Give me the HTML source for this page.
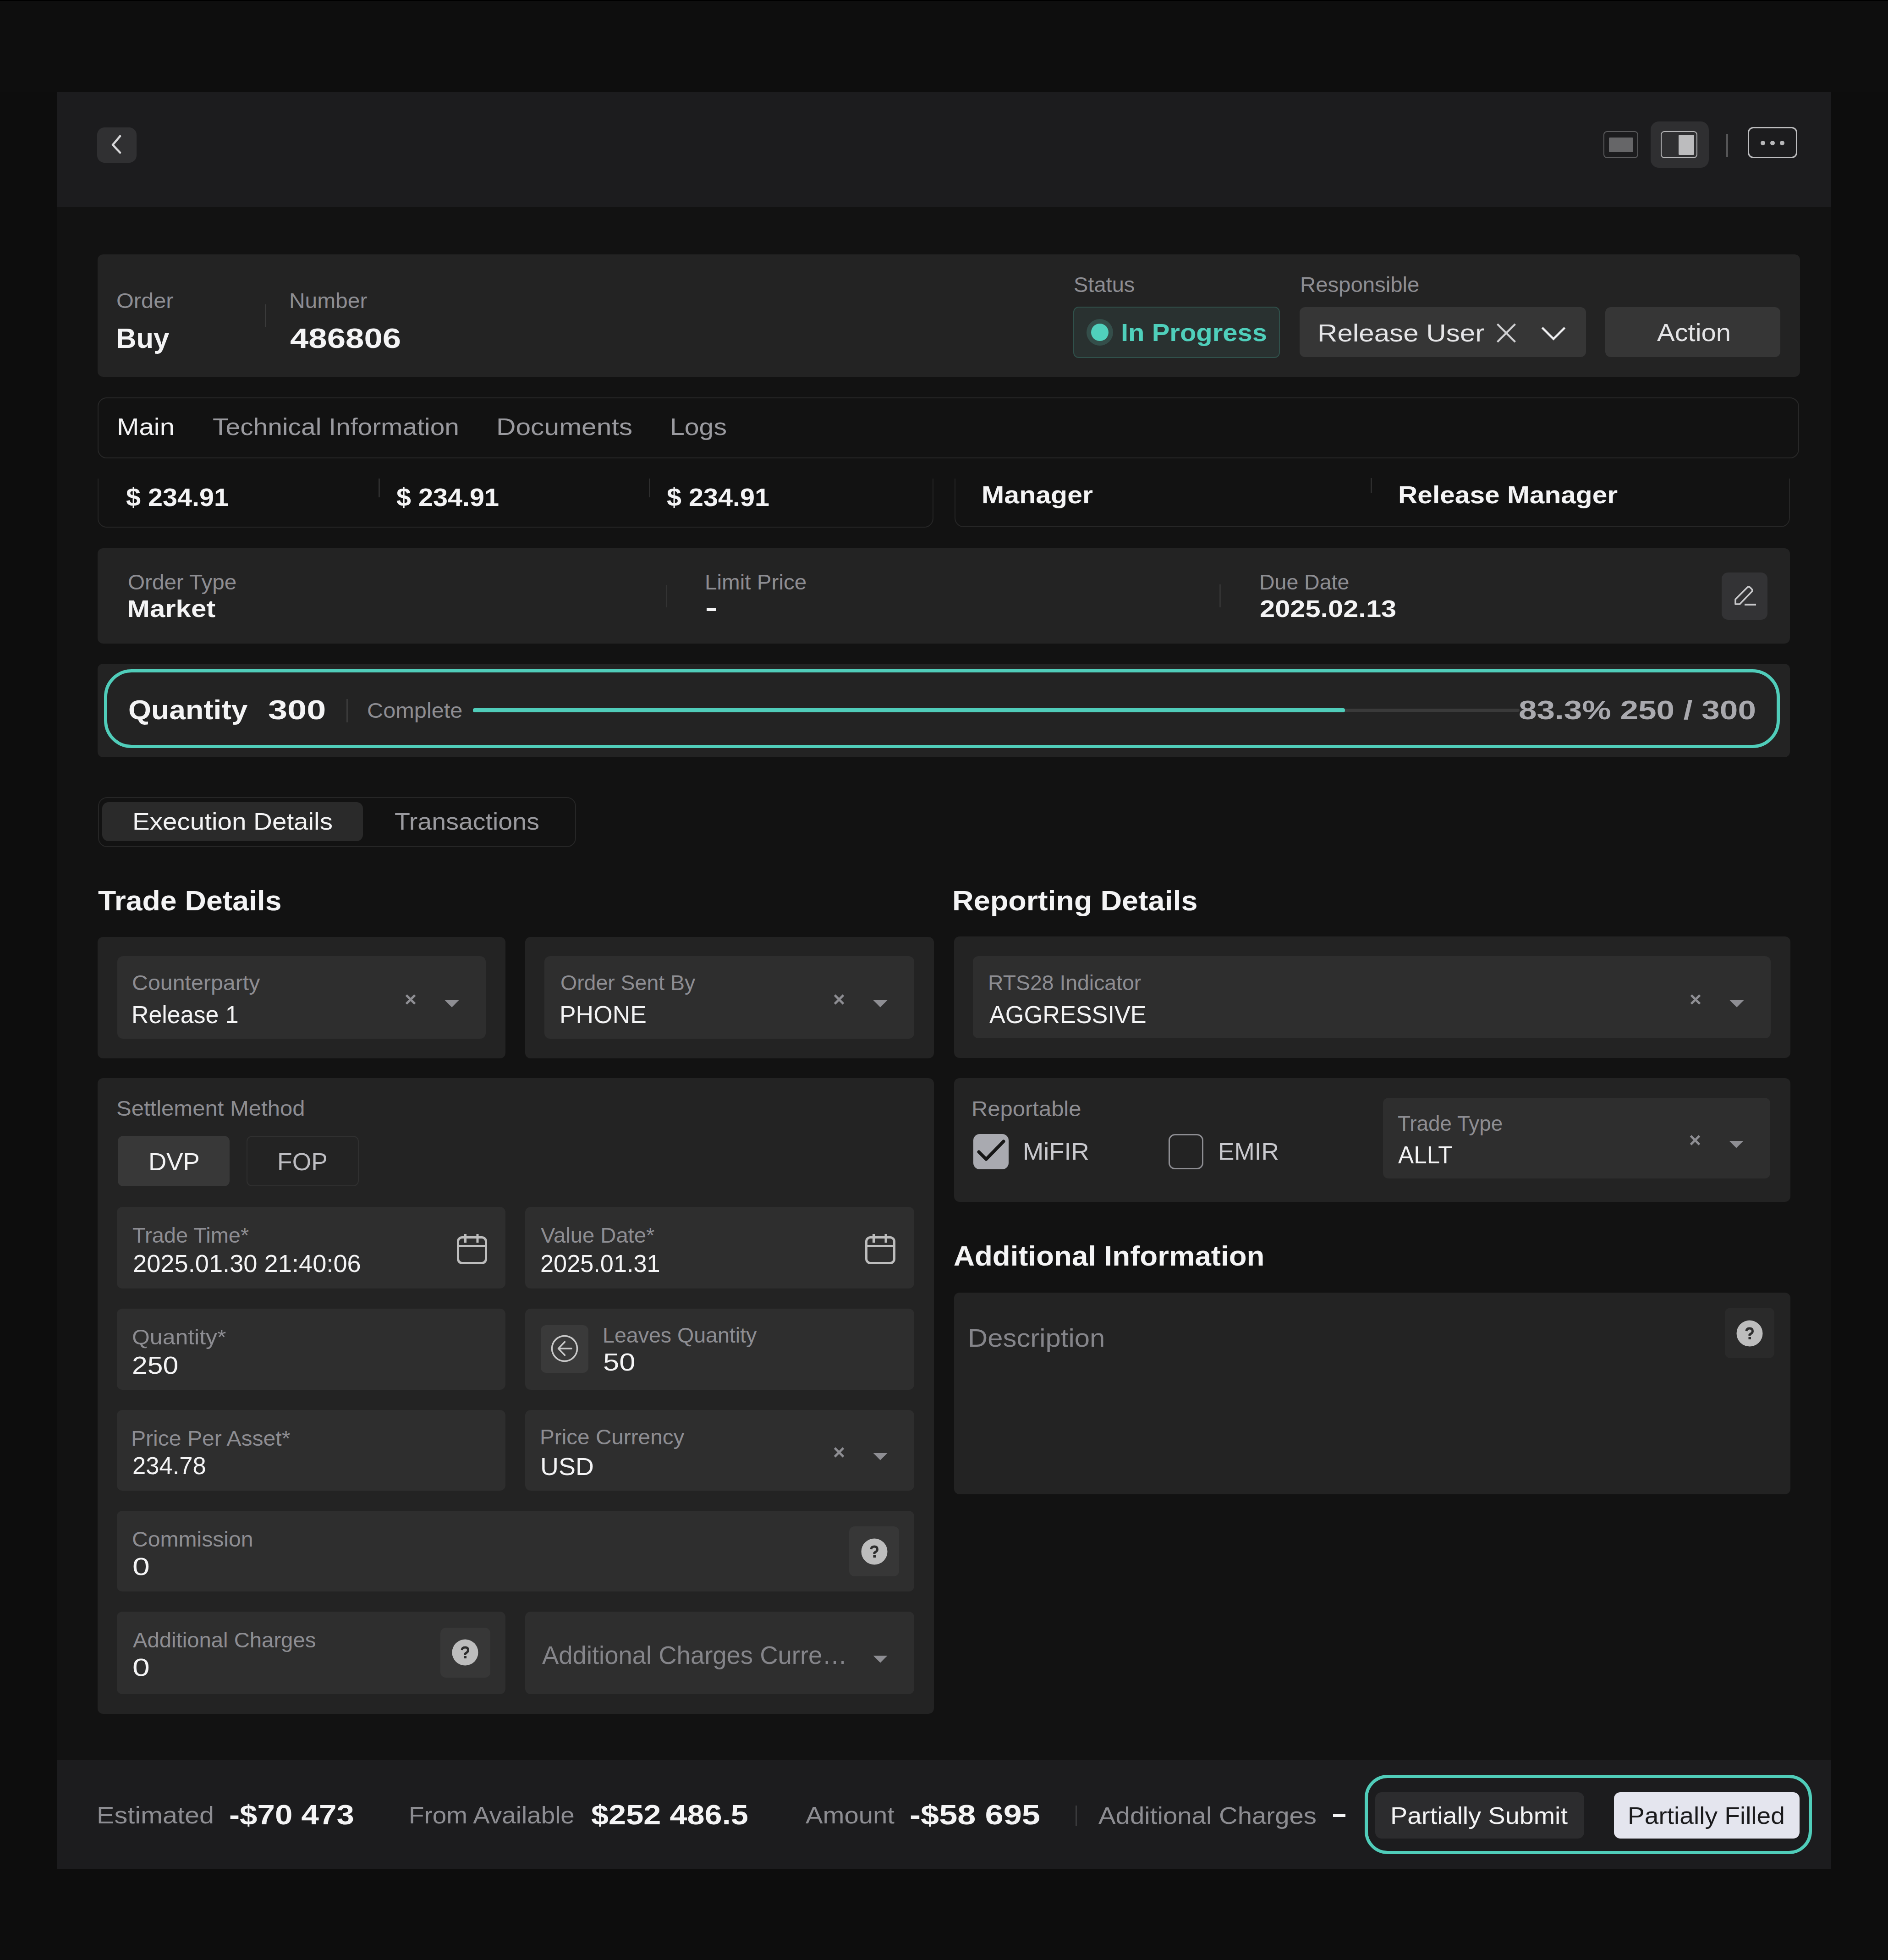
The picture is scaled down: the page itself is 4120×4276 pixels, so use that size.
<!DOCTYPE html>
<html><head><meta charset="utf-8">
<style>
html,body{margin:0;padding:0}
body{width:4120px;height:4276px;background:#0d0d0d;position:relative;overflow:hidden;font-family:"Liberation Sans",sans-serif}
.r{position:absolute;box-sizing:border-box}
.t{position:absolute;white-space:pre;line-height:1;transform-origin:0 0;font-family:"Liberation Sans",sans-serif}
svg{position:absolute;overflow:visible}
</style></head><body>
<!-- outer top band -->
<div class="r" style="left:0;top:0;width:4120px;height:201px;background:#0e0e0e"></div>
<div class="r" style="left:0;top:0;width:4120px;height:2px;background:#000"></div>
<!-- panel content -->
<div class="r" style="left:125px;top:201px;width:3870px;height:3876px;background:#121212"></div>
<!-- header -->
<div class="r" style="left:125px;top:201px;width:3870px;height:250px;background:#1c1c1e"></div>
<div class="r" style="left:212px;top:278px;width:86px;height:77px;background:#303032;border-radius:16px"></div>
<svg style="left:0;top:0" width="1" height="1"><polyline points="262,297 246,316 262,333" fill="none" stroke="#d8d8da" stroke-width="4.5" stroke-linecap="round" stroke-linejoin="round"/></svg>
<!-- view icons -->
<div class="r" style="left:3499px;top:286px;width:76px;height:59px;border:2.5px solid #5a5a5c;border-radius:8px"></div>
<div class="r" style="left:3511px;top:300px;width:53px;height:32px;background:#666668;border-radius:2px"></div>
<div class="r" style="left:3602px;top:265px;width:127px;height:101px;background:#2f2f31;border-radius:18px"></div>
<div class="r" style="left:3624px;top:286px;width:80px;height:59px;border:2.5px solid #b4b4b6;border-radius:8px"></div>
<div class="r" style="left:3663px;top:294px;width:34px;height:44px;background:#bcbcbe;border-radius:2px"></div>
<div class="r" style="left:3766px;top:292px;width:5px;height:51px;background:#555557"></div>
<div class="r" style="left:3814px;top:277px;width:108px;height:68px;border:3px solid #bdbdbf;border-radius:12px"></div>
<div class="r" style="left:3842px;top:307px;width:10px;height:10px;background:#b8b8ba;border-radius:50%"></div>
<div class="r" style="left:3863px;top:307px;width:10px;height:10px;background:#b8b8ba;border-radius:50%"></div>
<div class="r" style="left:3884px;top:307px;width:10px;height:10px;background:#b8b8ba;border-radius:50%"></div>

<!-- order card -->
<div class="r" style="left:213px;top:555px;width:3715px;height:267px;background:#232323;border-radius:12px"></div>
<div class="r" style="left:578px;top:664px;width:3px;height:50px;background:#3a3a3a"></div>
<div class="r" style="left:2342px;top:669px;width:451px;height:112px;background:#293130;border:2.5px solid #30514b;border-radius:12px"></div>
<div class="r" style="left:2371px;top:696px;width:58px;height:58px;background:#344e4a;border-radius:50%"></div>
<div class="r" style="left:2381px;top:706px;width:38px;height:38px;background:#50d0bc;border-radius:50%"></div>
<div class="r" style="left:2836px;top:670px;width:625px;height:109px;background:#363636;border-radius:12px"></div>
<svg style="left:0;top:0" width="1" height="1"><path d="M3269,708.5 L3305,744.5 M3305,708.5 L3269,744.5" stroke="#d0d0d2" stroke-width="4.2" stroke-linecap="square"/><polyline points="3367,716.5 3390,739.5 3413,716.5" fill="none" stroke="#f0f0f2" stroke-width="4.6" stroke-linecap="square" stroke-linejoin="miter"/></svg>
<div class="r" style="left:3503px;top:670px;width:382px;height:109px;background:#363636;border-radius:12px"></div>

<!-- tabs bar -->
<div class="r" style="left:213px;top:867px;width:3713px;height:133px;border:2px solid #282828;border-radius:20px"></div>

<!-- amounts cards (clipped top) -->
<div class="r" style="left:213px;top:1044px;width:1824px;height:107px;overflow:hidden"><div class="r" style="left:0;top:-60px;width:1824px;height:167px;border:2px solid #262626;border-radius:20px"></div></div>
<div class="r" style="left:826px;top:1044px;width:3px;height:41px;background:#2e2e2e"></div>
<div class="r" style="left:1416px;top:1044px;width:3px;height:41px;background:#2e2e2e"></div>
<div class="r" style="left:2083px;top:1044px;width:1823px;height:106px;overflow:hidden"><div class="r" style="left:0;top:-60px;width:1823px;height:166px;border:2px solid #262626;border-radius:20px"></div></div>
<div class="r" style="left:2991px;top:1043px;width:3px;height:33px;background:#2e2e2e"></div>

<!-- order type card -->
<div class="r" style="left:213px;top:1196px;width:3693px;height:208px;background:#232323;border-radius:12px"></div>
<div class="r" style="left:1453px;top:1276px;width:3px;height:49px;background:#333"></div>
<div class="r" style="left:2661px;top:1275px;width:3px;height:50px;background:#333"></div>
<div class="r" style="left:1542px;top:1327px;width:21px;height:6px;background:#f4f4f5"></div>
<div class="r" style="left:3757px;top:1249px;width:100px;height:103px;background:#333335;border-radius:14px"></div>
<svg style="left:0;top:0" width="1" height="1"><path d="M3787,1318 L3787,1307.5 L3813,1281.5 Q3816,1278.5 3819,1281.5 L3822.5,1285 Q3825.5,1288 3822.5,1291 L3796.5,1318 Z" fill="none" stroke="#c8c8ca" stroke-width="3.6" stroke-linejoin="round"/><path d="M3807,1319 L3832,1319" stroke="#c8c8ca" stroke-width="4"/></svg>

<!-- quantity card -->
<div class="r" style="left:213px;top:1448px;width:3693px;height:204px;background:#232323;border-radius:12px"></div>
<div class="r" style="left:227px;top:1460px;width:3657px;height:172px;border:7px solid #50cdba;border-radius:60px"></div>
<div class="r" style="left:756px;top:1525px;width:3px;height:51px;background:#3a3a3a"></div>
<div class="r" style="left:1032px;top:1546px;width:2284px;height:7px;background:#3a3a3a;border-radius:4px"></div>
<div class="r" style="left:1032px;top:1545px;width:1903px;height:9px;background:#50cdba;border-radius:4px"></div>

<!-- segmented control -->
<div class="r" style="left:214px;top:1739px;width:1043px;height:109px;border:2px solid #262626;border-radius:20px"></div>
<div class="r" style="left:223px;top:1750px;width:569px;height:85px;background:#2a2a2a;border-radius:14px"></div>

<!-- trade details cards -->
<div class="r" style="left:213px;top:2044px;width:890px;height:265px;background:#232323;border-radius:12px"></div>
<div class="r" style="left:256px;top:2086px;width:804px;height:180px;background:#2e2e2e;border-radius:12px"></div>
<div class="r" style="left:1146px;top:2044px;width:892px;height:265px;background:#232323;border-radius:12px"></div>
<div class="r" style="left:1188px;top:2086px;width:807px;height:180px;background:#2e2e2e;border-radius:12px"></div>

<!-- reporting card -->
<div class="r" style="left:2082px;top:2043px;width:1825px;height:265px;background:#232323;border-radius:12px"></div>
<div class="r" style="left:2123px;top:2086px;width:1741px;height:179px;background:#2e2e2e;border-radius:12px"></div>

<!-- settlement big card -->
<div class="r" style="left:213px;top:2352px;width:1825px;height:1387px;background:#232323;border-radius:12px"></div>
<div class="r" style="left:257px;top:2478px;width:244px;height:110px;background:#383838;border-radius:12px"></div>
<div class="r" style="left:538px;top:2478px;width:245px;height:110px;border:2px solid #303030;border-radius:12px"></div>
<div class="r" style="left:255px;top:2633px;width:848px;height:178px;background:#2e2e2e;border-radius:12px"></div>
<div class="r" style="left:1146px;top:2633px;width:849px;height:178px;background:#2e2e2e;border-radius:12px"></div>
<div class="r" style="left:255px;top:2855px;width:848px;height:177px;background:#2e2e2e;border-radius:12px"></div>
<div class="r" style="left:1146px;top:2855px;width:849px;height:177px;background:#2e2e2e;border-radius:12px"></div>
<div class="r" style="left:1180px;top:2891px;width:104px;height:104px;background:#3a3a3a;border-radius:12px"></div>
<div class="r" style="left:255px;top:3076px;width:848px;height:176px;background:#2e2e2e;border-radius:12px"></div>
<div class="r" style="left:1146px;top:3076px;width:849px;height:176px;background:#2e2e2e;border-radius:12px"></div>
<div class="r" style="left:255px;top:3296px;width:1740px;height:176px;background:#2e2e2e;border-radius:12px"></div>
<div class="r" style="left:1853px;top:3330px;width:109px;height:109px;background:#373737;border-radius:12px"></div>
<div class="r" style="left:255px;top:3516px;width:848px;height:180px;background:#2e2e2e;border-radius:12px"></div>
<div class="r" style="left:961px;top:3551px;width:109px;height:109px;background:#373737;border-radius:12px"></div>
<div class="r" style="left:1146px;top:3516px;width:849px;height:180px;background:#2e2e2e;border-radius:12px"></div>

<!-- reportable card -->
<div class="r" style="left:2082px;top:2352px;width:1825px;height:270px;background:#232323;border-radius:12px"></div>
<div class="r" style="left:2124px;top:2474px;width:77px;height:77px;background:#a9aab0;border-radius:14px"></div>
<svg style="left:0;top:0" width="1" height="1"><polyline points="2136,2513 2152,2529 2190,2490" fill="none" stroke="#161616" stroke-width="7" stroke-linecap="round" stroke-linejoin="round"/></svg>
<div class="r" style="left:2550px;top:2474px;width:76px;height:77px;border:3px solid #8e8e93;border-radius:14px"></div>
<div class="r" style="left:3018px;top:2395px;width:845px;height:176px;background:#2e2e2e;border-radius:12px"></div>

<!-- description card -->
<div class="r" style="left:2082px;top:2820px;width:1825px;height:440px;background:#232323;border-radius:12px"></div>
<div class="r" style="left:3764px;top:2853px;width:108px;height:110px;background:#2a2a2a;border-radius:12px"></div>

<!-- footer -->
<div class="r" style="left:125px;top:3840px;width:3870px;height:237px;background:#1c1c1e"></div>
<div class="r" style="left:2347px;top:3939px;width:3px;height:45px;background:#3a3a3c"></div>
<div class="r" style="left:2909px;top:3958px;width:27px;height:6px;background:#f4f4f5"></div>
<div class="r" style="left:2978px;top:3872px;width:976px;height:173px;border:7.5px solid #50cdba;border-radius:50px"></div>
<div class="r" style="left:3001px;top:3910px;width:456px;height:101px;background:#2c2c2e;border-radius:14px"></div>
<div class="r" style="left:3522px;top:3910px;width:405px;height:101px;background:#e4e5ee;border-radius:14px"></div>

<svg style="left:0;top:0" width="1" height="1"><path d="M886.5,2171.0 L905.5,2190.0 M905.5,2171.0 L886.5,2190.0" stroke="#8e8e93" stroke-width="5" stroke-linecap="butt"/><path d="M970.5,2182 L1001.5,2182 L986,2197.5 Z" fill="#8e8e93"/><path d="M1821.5,2171.0 L1840.5,2190.0 M1840.5,2171.0 L1821.5,2190.0" stroke="#8e8e93" stroke-width="5" stroke-linecap="butt"/><path d="M1905.5,2182 L1936.5,2182 L1921,2197.5 Z" fill="#8e8e93"/><path d="M3690.5,2171.0 L3709.5,2190.0 M3709.5,2171.0 L3690.5,2190.0" stroke="#8e8e93" stroke-width="5" stroke-linecap="butt"/><path d="M3774.5,2182 L3805.5,2182 L3790,2197.5 Z" fill="#8e8e93"/><path d="M3689.5,2478.0 L3708.5,2497.0 M3708.5,2478.0 L3689.5,2497.0" stroke="#8e8e93" stroke-width="5" stroke-linecap="butt"/><path d="M3773.5,2489 L3804.5,2489 L3789,2504.5 Z" fill="#8e8e93"/><path d="M1821.5,3159.0 L1840.5,3178.0 M1840.5,3159.0 L1821.5,3178.0" stroke="#8e8e93" stroke-width="5" stroke-linecap="butt"/><path d="M1905.5,3170 L1936.5,3170 L1921,3185.5 Z" fill="#8e8e93"/><path d="M1905.5,3612 L1936.5,3612 L1921,3627.5 Z" fill="#8e8e93"/><rect x="999.5" y="2699.5" width="61" height="56" rx="9" fill="none" stroke="#bdbdbd" stroke-width="5"/><path d="M999.5,2718.5 L1060.5,2718.5" stroke="#bdbdbd" stroke-width="5"/><path d="M1015.5,2692 L1015.5,2711 M1042,2692 L1042,2711" stroke="#bdbdbd" stroke-width="5"/><rect x="1890.5" y="2699.5" width="61" height="56" rx="9" fill="none" stroke="#bdbdbd" stroke-width="5"/><path d="M1890.5,2718.5 L1951.5,2718.5" stroke="#bdbdbd" stroke-width="5"/><path d="M1906.5,2692 L1906.5,2711 M1933,2692 L1933,2711" stroke="#bdbdbd" stroke-width="5"/><circle cx="1908" cy="3385" r="28.5" fill="#bdbdbd"/><path d="M1901,3380 Q1901.5,3374 1908,3374 Q1914.5,3374 1914.5,3380 Q1914.5,3384 1909.5,3386.5 L1908,3388 L1908,3390" fill="none" stroke="#2e2e2e" stroke-width="5"/><rect x="1905.5" y="3393" width="5.5" height="5" fill="#2e2e2e"/><circle cx="1015" cy="3605" r="28.5" fill="#bdbdbd"/><path d="M1008,3600 Q1008.5,3594 1015,3594 Q1021.5,3594 1021.5,3600 Q1021.5,3604 1016.5,3606.5 L1015,3608 L1015,3610" fill="none" stroke="#2e2e2e" stroke-width="5"/><rect x="1012.5" y="3613" width="5.5" height="5" fill="#2e2e2e"/><circle cx="3818" cy="2909" r="28.5" fill="#bdbdbd"/><path d="M3811,2904 Q3811.5,2898 3818,2898 Q3824.5,2898 3824.5,2904 Q3824.5,2908 3819.5,2910.5 L3818,2912 L3818,2914" fill="none" stroke="#2e2e2e" stroke-width="5"/><rect x="3815.5" y="2917" width="5.5" height="5" fill="#2e2e2e"/><circle cx="1232" cy="2942" r="27.5" fill="none" stroke="#c8c8c8" stroke-width="3.5"/><path d="M1247,2942 L1219,2942 M1232.5,2927.5 L1218.5,2942 L1232.5,2956.5" fill="none" stroke="#c8c8c8" stroke-width="3.5" stroke-linecap="round" stroke-linejoin="round"/></svg>
<div class="t" style="left:254.1px;top:633.1px;font-size:46.5px;font-weight:400;color:#8d8d92;transform:scaleX(1.0466)">Order</div>
<div class="t" style="left:252.5px;top:708.4px;font-size:61px;font-weight:700;color:#f4f4f5;transform:scaleX(1.0092)">Buy</div>
<div class="t" style="left:631.1px;top:633.1px;font-size:46.5px;font-weight:400;color:#8d8d92;transform:scaleX(1.0300)">Number</div>
<div class="t" style="left:633.1px;top:708.4px;font-size:61px;font-weight:700;color:#f4f4f5;transform:scaleX(1.1893)">486806</div>
<div class="t" style="left:2343.1px;top:598.1px;font-size:46.5px;font-weight:400;color:#8d8d92;transform:scaleX(1.0111)">Status</div>
<div class="t" style="left:2837.1px;top:598.1px;font-size:46.5px;font-weight:400;color:#8d8d92;transform:scaleX(1.0172)">Responsible</div>
<div class="t" style="left:2445.7px;top:698.3px;font-size:54px;font-weight:700;color:#4fcfbb;transform:scaleX(1.0739)">In Progress</div>
<div class="t" style="left:2874.6px;top:699.3px;font-size:54px;font-weight:400;color:#e4e4e6;transform:scaleX(1.1133)">Release User</div>
<div class="t" style="left:3615.7px;top:698.3px;font-size:54px;font-weight:400;color:#e4e4e6;transform:scaleX(1.0731)">Action</div>
<div class="t" style="left:254.7px;top:906.4px;font-size:51.5px;font-weight:400;color:#f4f4f5;transform:scaleX(1.1303)">Main</div>
<div class="t" style="left:463.7px;top:905.9px;font-size:51.5px;font-weight:400;color:#9a9a9f;transform:scaleX(1.1055)">Technical Information</div>
<div class="t" style="left:1082.7px;top:905.9px;font-size:51.5px;font-weight:400;color:#9a9a9f;transform:scaleX(1.1407)">Documents</div>
<div class="t" style="left:1461.7px;top:905.9px;font-size:51.5px;font-weight:400;color:#9a9a9f;transform:scaleX(1.1106)">Logs</div>
<div class="t" style="left:274.7px;top:1058.4px;font-size:55px;font-weight:700;color:#f4f4f5;transform:scaleX(1.0465)">$ 234.91</div>
<div class="t" style="left:864.7px;top:1058.4px;font-size:55px;font-weight:700;color:#f4f4f5;transform:scaleX(1.0465)">$ 234.91</div>
<div class="t" style="left:1454.7px;top:1058.4px;font-size:55px;font-weight:700;color:#f4f4f5;transform:scaleX(1.0465)">$ 234.91</div>
<div class="t" style="left:2141.6px;top:1051.8px;font-size:54px;font-weight:700;color:#f4f4f5;transform:scaleX(1.0948)">Manager</div>
<div class="t" style="left:3050.7px;top:1051.8px;font-size:54px;font-weight:700;color:#f4f4f5;transform:scaleX(1.0858)">Release Manager</div>
<div class="t" style="left:279.1px;top:1246.6px;font-size:46.5px;font-weight:400;color:#8d8d92;transform:scaleX(1.0240)">Order Type</div>
<div class="t" style="left:276.6px;top:1302.8px;font-size:51px;font-weight:700;color:#f4f4f5;transform:scaleX(1.1751)">Market</div>
<div class="t" style="left:1538.1px;top:1246.6px;font-size:46.5px;font-weight:400;color:#8d8d92;transform:scaleX(1.0244)">Limit Price</div>
<div class="t" style="left:2748.1px;top:1246.6px;font-size:46.5px;font-weight:400;color:#8d8d92;transform:scaleX(0.9990)">Due Date</div>
<div class="t" style="left:2748.6px;top:1302.8px;font-size:51px;font-weight:700;color:#f4f4f5;transform:scaleX(1.1682)">2025.02.13</div>
<div class="t" style="left:280.4px;top:1519.2px;font-size:60px;font-weight:700;color:#f4f4f5;transform:scaleX(1.0706)">Quantity</div>
<div class="t" style="left:585.0px;top:1519.2px;font-size:60px;font-weight:700;color:#f4f4f5;transform:scaleX(1.2617)">300</div>
<div class="t" style="left:801.1px;top:1527.1px;font-size:46px;font-weight:400;color:#8d8d92;transform:scaleX(1.0586)">Complete</div>
<div class="t" style="left:3314.2px;top:1519.9px;font-size:58px;font-weight:700;color:#a9a9ae;transform:scaleX(1.2261)">83.3% 250 / 300</div>
<div class="t" style="left:288.7px;top:1767.4px;font-size:51.5px;font-weight:400;color:#f4f4f5;transform:scaleX(1.0982)">Execution Details</div>
<div class="t" style="left:860.8px;top:1767.4px;font-size:51.5px;font-weight:400;color:#9a9a9f;transform:scaleX(1.0785)">Transactions</div>
<div class="t" style="left:214.4px;top:1935.4px;font-size:61px;font-weight:700;color:#f4f4f5;transform:scaleX(1.0547)">Trade Details</div>
<div class="t" style="left:2078.4px;top:1935.4px;font-size:61px;font-weight:700;color:#f4f4f5;transform:scaleX(1.0604)">Reporting Details</div>
<div class="t" style="left:288.1px;top:2120.6px;font-size:46.5px;font-weight:400;color:#8d8d92;transform:scaleX(1.0394)">Counterparty</div>
<div class="t" style="left:286.9px;top:2187.1px;font-size:53px;font-weight:400;color:#f4f4f5;transform:scaleX(0.9791)">Release 1</div>
<div class="t" style="left:1223.1px;top:2120.6px;font-size:46.5px;font-weight:400;color:#8d8d92;transform:scaleX(0.9988)">Order Sent By</div>
<div class="t" style="left:1220.9px;top:2187.1px;font-size:53px;font-weight:400;color:#f4f4f5;transform:scaleX(1.0068)">PHONE</div>
<div class="t" style="left:2156.1px;top:2120.6px;font-size:46.5px;font-weight:400;color:#8d8d92;transform:scaleX(0.9973)">RTS28 Indicator</div>
<div class="t" style="left:2158.9px;top:2187.1px;font-size:53px;font-weight:400;color:#f4f4f5;transform:scaleX(0.9859)">AGGRESSIVE</div>
<div class="t" style="left:254.0px;top:2394.6px;font-size:46.5px;font-weight:400;color:#8d8d92;transform:scaleX(1.0541)">Settlement Method</div>
<div class="t" style="left:323.8px;top:2507.3px;font-size:54px;font-weight:400;color:#f4f4f5;transform:scaleX(1.0077)">DVP</div>
<div class="t" style="left:604.9px;top:2507.3px;font-size:54px;font-weight:400;color:#bdbdc2;transform:scaleX(0.9893)">FOP</div>
<div class="t" style="left:2120.0px;top:2395.6px;font-size:46.5px;font-weight:400;color:#8d8d92;transform:scaleX(1.0526)">Reportable</div>
<div class="t" style="left:2231.8px;top:2486.0px;font-size:52px;font-weight:400;color:#c9c9ce;transform:scaleX(1.0449)">MiFIR</div>
<div class="t" style="left:2657.9px;top:2486.0px;font-size:52px;font-weight:400;color:#c9c9ce;transform:scaleX(1.0215)">EMIR</div>
<div class="t" style="left:3050.2px;top:2427.6px;font-size:46.5px;font-weight:400;color:#8d8d92;transform:scaleX(0.9853)">Trade Type</div>
<div class="t" style="left:3051.0px;top:2493.1px;font-size:53px;font-weight:400;color:#f4f4f5;transform:scaleX(0.9667)">ALLT</div>
<div class="t" style="left:289.1px;top:2671.6px;font-size:46.5px;font-weight:400;color:#8d8d92;transform:scaleX(1.0110)">Trade Time*</div>
<div class="t" style="left:289.8px;top:2730.1px;font-size:53px;font-weight:400;color:#f4f4f5;transform:scaleX(1.0236)">2025.01.30 21:40:06</div>
<div class="t" style="left:1180.1px;top:2671.6px;font-size:46.5px;font-weight:400;color:#8d8d92;transform:scaleX(1.0148)">Value Date*</div>
<div class="t" style="left:1178.9px;top:2730.1px;font-size:53px;font-weight:400;color:#f4f4f5;transform:scaleX(0.9864)">2025.01.31</div>
<div class="t" style="left:2080.5px;top:2710.4px;font-size:61px;font-weight:700;color:#f4f4f5;transform:scaleX(1.0428)">Additional Information</div>
<div class="t" style="left:2111.6px;top:2890.6px;font-size:56px;font-weight:400;color:#85858a;transform:scaleX(1.0683)">Description</div>
<div class="t" style="left:288.0px;top:2893.6px;font-size:46.5px;font-weight:400;color:#8d8d92;transform:scaleX(1.0743)">Quantity*</div>
<div class="t" style="left:287.6px;top:2951.6px;font-size:53px;font-weight:400;color:#f4f4f5;transform:scaleX(1.1450)">250</div>
<div class="t" style="left:1315.1px;top:2889.6px;font-size:46.5px;font-weight:400;color:#8d8d92;transform:scaleX(1.0006)">Leaves Quantity</div>
<div class="t" style="left:1315.5px;top:2945.1px;font-size:53px;font-weight:400;color:#f4f4f5;transform:scaleX(1.1953)">50</div>
<div class="t" style="left:286.1px;top:3114.6px;font-size:46.5px;font-weight:400;color:#8d8d92;transform:scaleX(1.0339)">Price Per Asset*</div>
<div class="t" style="left:288.9px;top:3171.1px;font-size:53px;font-weight:400;color:#f4f4f5;transform:scaleX(0.9912)">234.78</div>
<div class="t" style="left:1178.1px;top:3111.6px;font-size:46.5px;font-weight:400;color:#8d8d92;transform:scaleX(1.0255)">Price Currency</div>
<div class="t" style="left:1178.8px;top:3173.1px;font-size:53px;font-weight:400;color:#f4f4f5;transform:scaleX(1.0450)">USD</div>
<div class="t" style="left:288.1px;top:3334.6px;font-size:46.5px;font-weight:400;color:#8d8d92;transform:scaleX(1.0335)">Commission</div>
<div class="t" style="left:289.3px;top:3391.1px;font-size:53px;font-weight:400;color:#f4f4f5;transform:scaleX(1.2803)">0</div>
<div class="t" style="left:290.1px;top:3554.6px;font-size:46.5px;font-weight:400;color:#8d8d92;transform:scaleX(1.0163)">Additional Charges</div>
<div class="t" style="left:289.3px;top:3611.1px;font-size:53px;font-weight:400;color:#f4f4f5;transform:scaleX(1.2803)">0</div>
<div class="t" style="left:1182.8px;top:3584.4px;font-size:55px;font-weight:400;color:#85858a;transform:scaleX(0.9900)">Additional Charges Curre…</div>
<div class="t" style="left:210.7px;top:3934.0px;font-size:52px;font-weight:400;color:#8d8d92;transform:scaleX(1.1075)">Estimated</div>
<div class="t" style="left:500.2px;top:3929.4px;font-size:61px;font-weight:700;color:#f4f4f5;transform:scaleX(1.1329)">-$70 473</div>
<div class="t" style="left:891.8px;top:3934.0px;font-size:52px;font-weight:400;color:#8d8d92;transform:scaleX(1.0550)">From Available</div>
<div class="t" style="left:1290.3px;top:3929.4px;font-size:61px;font-weight:700;color:#f4f4f5;transform:scaleX(1.1228)">$252 486.5</div>
<div class="t" style="left:1757.7px;top:3934.0px;font-size:52px;font-weight:400;color:#8d8d92;transform:scaleX(1.0826)">Amount</div>
<div class="t" style="left:1985.1px;top:3929.4px;font-size:61px;font-weight:700;color:#f4f4f5;transform:scaleX(1.1836)">-$58 695</div>
<div class="t" style="left:2396.7px;top:3934.5px;font-size:52px;font-weight:400;color:#8d8d92;transform:scaleX(1.0832)">Additional Charges</div>
<div class="t" style="left:3033.8px;top:3934.5px;font-size:52px;font-weight:400;color:#f4f4f5;transform:scaleX(1.0710)">Partially Submit</div>
<div class="t" style="left:3551.8px;top:3934.5px;font-size:52px;font-weight:400;color:#1a1a1c;transform:scaleX(1.0594)">Partially Filled</div>
</body></html>
